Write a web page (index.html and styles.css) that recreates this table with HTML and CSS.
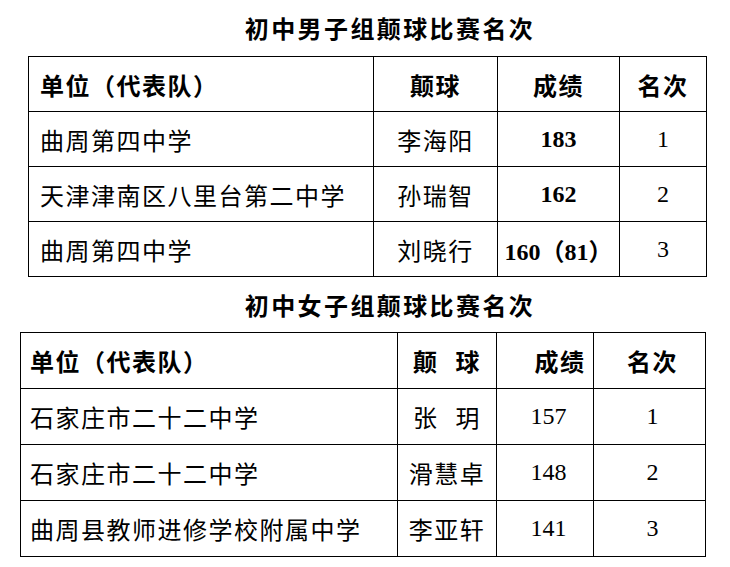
FILE: index.html
```html
<!DOCTYPE html>
<html lang="zh">
<head>
<meta charset="utf-8">
<title>颠球比赛名次</title>
<link rel="stylesheet" href="styles.css">
</head>
<body>
<div class="page">
  <h1 class="title title-first">初中男子组颠球比赛名次</h1>
  <table class="rank rank-boys">
    <colgroup>
      <col class="c1"><col class="c2"><col class="c3"><col class="c4">
    </colgroup>
    <tr class="head">
      <td class="unit">单位（代表队）</td>
      <td class="ctr">颠球</td>
      <td class="ctr">成绩</td>
      <td class="ctr">名次</td>
    </tr>
    <tr>
      <td class="unit">曲周第四中学</td>
      <td class="ctr">李海阳</td>
      <td class="ctr num bold">183</td>
      <td class="ctr num">1</td>
    </tr>
    <tr>
      <td class="unit">天津津南区八里台第二中学</td>
      <td class="ctr">孙瑞智</td>
      <td class="ctr num bold">162</td>
      <td class="ctr num">2</td>
    </tr>
    <tr>
      <td class="unit">曲周第四中学</td>
      <td class="ctr">刘晓行</td>
      <td class="ctr num bold">160（81）</td>
      <td class="ctr num">3</td>
    </tr>
  </table>

  <h1 class="title title-second">初中女子组颠球比赛名次</h1>
  <table class="rank rank-girls">
    <colgroup>
      <col class="c1"><col class="c2"><col class="c3"><col class="c4">
    </colgroup>
    <tr class="head">
      <td class="unit">单位（代表队）</td>
      <td class="ctr spaced">颠 球</td>
      <td class="ctr score-head">成绩</td>
      <td class="ctr place">名次</td>
    </tr>
    <tr>
      <td class="unit">石家庄市二十二中学</td>
      <td class="ctr spaced">张 玥</td>
      <td class="ctr num score">157</td>
      <td class="ctr num place">1</td>
    </tr>
    <tr>
      <td class="unit">石家庄市二十二中学</td>
      <td class="ctr">滑慧卓</td>
      <td class="ctr num score">148</td>
      <td class="ctr num place">2</td>
    </tr>
    <tr>
      <td class="unit">曲周县教师进修学校附属中学</td>
      <td class="ctr">李亚轩</td>
      <td class="ctr num score">141</td>
      <td class="ctr num place">3</td>
    </tr>
  </table>
</div>
</body>
</html>
```

FILE: styles.css
```css
html, body {
  margin: 0;
  padding: 0;
  background: #fff;
}

.page {
  width: 730px;
  height: 567px;
  font-family: "Liberation Serif", "Noto Sans CJK SC", serif;
  color: #000;
}

.title {
  margin: 0;
  padding-left: 50px;
  text-align: center;
  font-family: "Noto Sans CJK SC", sans-serif;
  font-size: 24px;
  font-weight: 700;
  letter-spacing: 2.4px;
}

.title-first {
  height: 56px;
  line-height: 56px;
}

.title-second {
  height: 55px;
  line-height: 55px;
}

.rank {
  border-collapse: collapse;
  table-layout: fixed;
  font-size: 24px;
  letter-spacing: 1.5px;
}

.rank td {
  border: 1px solid #000;
  padding: 0;
  vertical-align: middle;
  white-space: nowrap;
  font-family: "Noto Sans CJK SC", sans-serif;
}

.rank-boys {
  margin-left: 28px;
  width: 679px;
}

.rank-boys tr {
  height: 55px;
}

.rank-boys .c1 { width: 345px; }
.rank-boys .c2 { width: 124px; }
.rank-boys .c3 { width: 122px; }
.rank-boys .c4 { width: 87px; }

.rank-boys .unit {
  padding-left: 11px;
}

.rank-girls {
  margin-left: 20px;
  width: 686px;
}

.rank-girls tr {
  height: 56px;
}

.rank-girls .c1 { width: 377px; }
.rank-girls .c2 { width: 99px; }
.rank-girls .c3 { width: 97px; }
.rank-girls .c4 { width: 112px; }

.rank-girls .unit {
  padding-left: 9px;
}

.head td {
  font-weight: 700;
}

.ctr {
  text-align: center;
}

.rank td.num {
  font-family: "Liberation Serif", "Noto Sans CJK SC", serif;
  font-size: 24px;
  letter-spacing: 0;
}

.rank td.bold {
  font-weight: 700;
}

.spaced {
  word-spacing: 10px;
}

.score-head {
  padding-left: 30px !important;
}

.score {
  padding-left: 7px !important;
}

.place {
  padding-left: 6px !important;
}
```
